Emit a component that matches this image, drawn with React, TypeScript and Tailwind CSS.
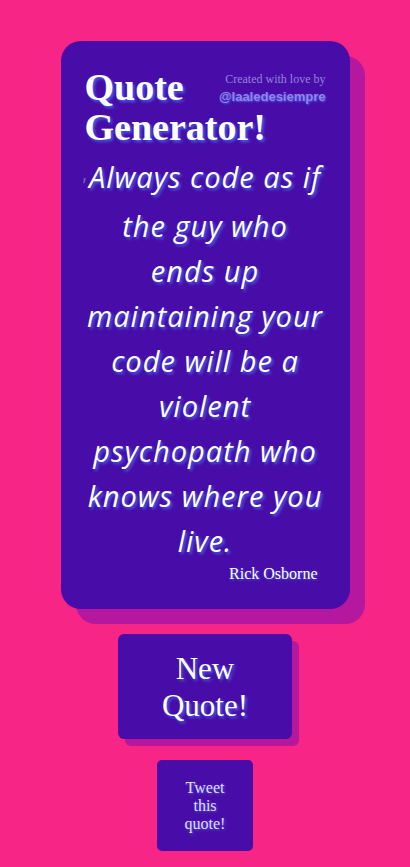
export default function App() {
  return (
    <div className="flex min-h-screen flex-col items-center bg-[#f72585] pt-[41px] pb-[17px]">
      <div className="w-[289px] rounded-[20px] bg-[#480ca8] px-[24px] pt-[26px] pb-[24px] shadow-[15px_15px_0_#b5179e]">
        <div className="float-right mt-[5px] text-right">
          <p className="font-['Liberation_Serif',serif] text-[12px] leading-[14px] text-[#9484dc]">
            Created with love by
          </p>
          <p className="mt-[2px] font-['Liberation_Sans',sans-serif] text-[13px] font-bold leading-[18px] text-[#9585e2] [text-shadow:1px_1px_2px_#4361ee]">
            @laaledesiempre
          </p>
        </div>
        <h1 className="font-['Liberation_Serif',serif] text-[38px] font-bold leading-[40px] text-white [text-shadow:2px_2px_3px_#4361ee]">
          Quote Generator!
        </h1>
        <p className="clear-both mt-[7px] text-center font-['Open_Sans',sans-serif] text-[29px] italic leading-[45px] tracking-[1px] text-white [text-shadow:2px_2px_3px_#4361ee]">
          <span className="inline-block w-0 -translate-x-[8px] translate-y-[4px] text-[20px] text-[#a99ac9] opacity-60 [text-shadow:none]">'</span>
          Always code as if<br />
          the guy who<br />
          ends up<br />
          maintaining your<br />
          code will be a<br />
          violent<br />
          psychopath who<br />
          knows where you<br />
          live.
        </p>
        <p className="pr-[8px] text-right font-['Liberation_Serif',serif] text-[16px] leading-[22px] text-white [text-shadow:1px_1px_3px_#4361ee]">
          Rick Osborne
        </p>
      </div>

      <button className="mt-[25px] h-[105px] w-[174px] rounded-[6px] bg-[#480ca8] px-[40px] font-['Liberation_Serif',serif] text-[31px] leading-[37px] text-white shadow-[7px_7px_0_#b5179e] [text-shadow:2px_2px_3px_#4361ee]">
        New Quote!
      </button>

      <a
        href="#"
        className="mt-[21px] flex h-[91px] w-[96px] items-center justify-center rounded-[5px] bg-[#480ca8] px-[24px] text-center font-['Liberation_Serif',serif] text-[16px] leading-[18px] text-[#e4dcff] [text-shadow:1px_1px_3px_#4361ee]"
      >
        Tweet this quote!
      </a>
    </div>
  );
}
